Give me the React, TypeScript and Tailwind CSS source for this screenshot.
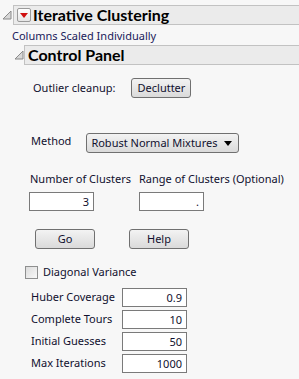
import React from "react";

const font = { fontFamily: '"Noto Sans", "Liberation Sans", sans-serif' };
const titleFont = { fontFamily: 'Lato, "Liberation Sans", sans-serif' };

function Disclosure() {
  return (
    <svg width="10" height="10" viewBox="0 0 10 10" className="shrink-0">
      <polygon points="1,9 9,9 9,1" fill="#d8d8d8" stroke="#8a8a8a" strokeWidth="1" />
    </svg>
  );
}

function Btn({ label, className }: { label: string; className: string }) {
  return (
    <div
      className={`flex items-center justify-center h-[20px] rounded-[3px] border border-[#707070] bg-gradient-to-b from-[#f3f3f3] to-[#dadada] text-[11px] whitespace-nowrap text-[#10102e] ${className}`}
    >
      {label}
    </div>
  );
}

function NumBox({ value, className }: { value: string; className: string }) {
  return (
    <div
      className={`h-[19px] border border-[#7a7a7a] bg-white text-right pr-[4px] text-[11px] leading-[17px] text-[#10102e] ${className}`}
    >
      {value}
    </div>
  );
}

const params = [
  { label: "Huber Coverage", value: "0.9" },
  { label: "Complete Tours", value: "10" },
  { label: "Initial Guesses", value: "50" },
  { label: "Max Iterations", value: "1000" },
];

export default function App() {
  return (
    <div className="w-[299px] h-[379px] bg-[#f7f7f7] overflow-hidden text-[#10102e] whitespace-nowrap" style={font}>
      {/* Report header */}
      <div className="flex items-center pt-[5px] pl-[2px]">
        <Disclosure />
        <div className="ml-[1px] flex-1 h-[20px] flex items-center border border-[#c2c2c2] border-r-0 bg-[#ebebeb] pl-[3px]">
          <div className="w-[14px] h-[14px] border border-[#9a9a9a] rounded-[2px] bg-gradient-to-b from-white to-[#e6e6e6] flex items-center justify-center">
            <svg width="8" height="5" viewBox="0 0 8 5">
              <polygon points="0,0 8,0 4,5" fill="#d01010" />
            </svg>
          </div>
          <span className="ml-[2px] text-[16px] font-bold text-black leading-none" style={titleFont}>
            Iterative Clustering
          </span>
        </div>
      </div>
      <div className="pl-[12px] pt-[3px] text-[11px] leading-[15px] text-[#20205a]">Columns Scaled Individually</div>

      {/* Control panel header */}
      <div className="flex items-center pt-[2px] pl-[14px]">
        <Disclosure />
        <div className="flex-1 h-[20px] flex items-center border border-[#c2c2c2] border-r-0 bg-[#ebebeb] pl-[3px]">
          <span className="text-[16px] font-bold text-black leading-none" style={titleFont}>
            Control Panel
          </span>
        </div>
      </div>

      {/* Outlier cleanup */}
      <div className="flex items-center pl-[33px] mt-[13px]">
        <span className="text-[11px]">Outlier cleanup:</span>
        <Btn label="Declutter" className="ml-[16px] w-[60px]" />
      </div>

      {/* Method */}
      <div className="flex items-center pl-[31px] mt-[35px]">
        <span className="text-[11px] -mt-[4px]">Method</span>
        <div className="ml-[15px] w-[153px] h-[20px] flex items-center justify-between rounded-[3px] border border-[#707070] bg-gradient-to-b from-[#f3f3f3] to-[#dadada] pl-[4px] pr-[6px] text-[11px]">
          <span>Robust Normal Mixtures</span>
          <svg width="8" height="5" viewBox="0 0 8 5">
            <polygon points="0,0 8,0 4,5" fill="#000" />
          </svg>
        </div>
      </div>

      {/* Clusters */}
      <div className="flex pl-[30px] mt-[18px]">
        <div className="flex flex-col w-[109px]">
          <span className="text-[11px] leading-[16px]">Number of Clusters</span>
          <NumBox value="3" className="mt-[5px] -ml-[1px] w-[65px]" />
        </div>
        <div className="flex flex-col">
          <span className="text-[11px] leading-[16px]">Range of Clusters (Optional)</span>
          <NumBox value="." className="mt-[5px] w-[65px]" />
        </div>
      </div>

      {/* Go / Help */}
      <div className="flex pl-[35px] mt-[18px]">
        <Btn label="Go" className="w-[60px]" />
        <Btn label="Help" className="ml-[34px] w-[60px]" />
      </div>

      {/* Diagonal variance */}
      <div className="flex items-center pl-[25px] mt-[15px]">
        <div className="w-[13px] h-[13px] border border-[#8e8f8f] bg-gradient-to-br from-[#dcdcdc] to-[#f8f8f8]" />
        <span className="ml-[5px] text-[11px]">Diagonal Variance</span>
      </div>

      {/* Params */}
      <div className="flex flex-col pl-[31px] mt-[7px] gap-[3px]">
        {params.map((p) => (
          <div key={p.label} className="flex items-center">
            <span className="w-[91px] text-[11px]">{p.label}</span>
            <NumBox value={p.value} className="w-[65px]" />
          </div>
        ))}
      </div>
    </div>
  );
}
